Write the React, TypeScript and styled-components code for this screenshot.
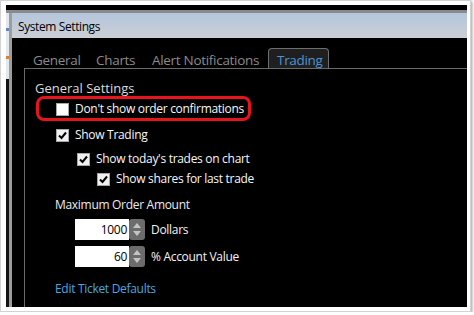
import React from "react";
import styled, { createGlobalStyle } from "styled-components";

const GlobalStyle = createGlobalStyle`
  html, body { margin: 0; padding: 0; background: #ffffff; }
  body { font-family: "Open Sans", "Noto Sans", Arial, sans-serif; }
  *, *::before, *::after { box-sizing: border-box; }
`;

const Frame = styled.div`
  width: 471px;
  height: 312px;
  border: 1px solid #d2d2d2;
  padding: 4px 3px 4px 5px;
  background: #ffffff;
  box-shadow: 1px 1px 3px rgba(0, 0, 0, 0.4);
  display: flex;
`;

const Screen = styled.div`
  flex: 1;
  background: #000;
  display: flex;
  flex-direction: column;
  overflow: hidden;
`;

const TopBand = styled.div`
  height: 5px;
  flex: none;
  background: #000;
`;

const WindowTopEdge = styled.div`
  height: 3px;
  flex: none;
  background: #8a8a8a;
`;

const Desk = styled.div`
  flex: 1;
  display: flex;
  min-height: 0;
`;

const BackdropEdge = styled.div`
  width: 3px;
  flex: none;
  background: linear-gradient(
    #e3e8ee 0px,
    #e3e8ee 15px,
    #5d87c0 15px,
    #5d87c0 18px,
    #e3e8ee 18px,
    #e3e8ee 43px,
    #d9822b 43px,
    #d9822b 46px,
    #e3e8ee 46px,
    #e3e8ee 66px,
    #141414 66px
  );
`;

const Window = styled.div`
  flex: 1;
  display: flex;
  flex-direction: column;
  border-left: 3px solid #9d9d9d;
  min-width: 0;
`;

const TitleBar = styled.div`
  height: 25px;
  flex: none;
  background: linear-gradient(#b4c6dd, #cbcfd5);
  padding: 2px 0 0 6px;
  display: flex;
  align-items: center;
  font-size: 12px;
  letter-spacing: -0.4px;
  line-height: 16px;
  color: #000;
`;

const Content = styled.div`
  flex: 1;
  display: flex;
  flex-direction: column;
  padding-left: 12px;
  min-height: 0;
`;

const TabStrip = styled.div`
  height: 30px;
  flex: none;
  display: flex;
  align-items: flex-end;
`;

const Tab = styled.div<{ $w: number; $active?: boolean }>`
  width: ${(p) => p.$w}px;
  height: 20px;
  flex: none;
  padding: 3px 0 0 8px;
  font-size: 13.5px;
  letter-spacing: -0.3px;
  line-height: 17px;
  white-space: nowrap;
  color: ${(p) => (p.$active ? "#4d93d6" : "#8b8b8b")};
  background: ${(p) => (p.$active ? "#1f1f1f" : "transparent")};
  border: 1px solid ${(p) => (p.$active ? "#6f6f6f" : "transparent")};
  border-bottom: none;
  border-radius: 4px 4px 0 0;
`;

const Panel = styled.div`
  flex: 1;
  border-top: 1px solid #6a6a6a;
  border-left: 1px solid #6a6a6a;
  padding: 11px 0 0 10px;
  display: flex;
  flex-direction: column;
  align-items: flex-start;
`;

const Heading = styled.div`
  font-size: 13px;
  line-height: 16px;
  color: #dcdcdc;
`;

const Annotation = styled.div`
  width: 215px;
  margin-left: 1px;
  border: 3px solid #e8141b;
  border-radius: 8px;
  padding: 2px 0 1px 17px;
`;

const CheckRow = styled.label<{ $indent?: number; $mt?: number }>`
  display: flex;
  align-items: center;
  gap: 6px;
  margin-left: ${(p) => p.$indent ?? 0}px;
  margin-top: ${(p) => p.$mt ?? 0}px;
  font-size: 12px;
  letter-spacing: -0.3px;
  line-height: 16px;
  color: #f7f7f7;
  white-space: nowrap;
`;

const Box = styled.span<{ $checked?: boolean }>`
  width: 13px;
  height: 13px;
  flex: none;
  display: flex;
  align-items: center;
  justify-content: center;
  background: ${(p) => (p.$checked ? "#f0f0f0" : "#ffffff")};
  border: 1px solid #a6a6a6;
`;

const Caption = styled.div<{ $indent?: number; $mt?: number }>`
  margin-left: ${(p) => p.$indent ?? 0}px;
  margin-top: ${(p) => p.$mt ?? 0}px;
  font-size: 12px;
  letter-spacing: -0.3px;
  line-height: 16px;
  color: #ececec;
  white-space: nowrap;
`;

const SpinRow = styled.div<{ $mt?: number }>`
  display: flex;
  align-items: center;
  height: 21px;
  margin-left: 40px;
  margin-top: ${(p) => p.$mt ?? 0}px;
`;

const NumberBox = styled.div`
  width: 54px;
  height: 21px;
  background: #ffffff;
  color: #000;
  font-size: 12px;
  letter-spacing: -0.3px;
  line-height: 21px;
  text-align: right;
  padding-right: 2px;
`;

const SpinButtons = styled.div`
  width: 16px;
  height: 21px;
  background: #6c6c6c;
  border-radius: 3px;
  display: flex;
  flex-direction: column;
  align-items: center;
  justify-content: space-evenly;
`;

const SpinLabel = styled.span`
  margin-left: 6px;
  font-size: 12px;
  letter-spacing: -0.3px;
  line-height: 16px;
  color: #f4f4f4;
  white-space: nowrap;
`;

const Link = styled.a`
  margin-left: 20px;
  margin-top: 14px;
  font-size: 12px;
  letter-spacing: -0.3px;
  line-height: 16px;
  color: #46a8e4;
  text-decoration: none;
  white-space: nowrap;
`;

const Check = () => (
  <svg width="11" height="11" viewBox="0 0 11 11">
    <polyline points="2,5.5 4.5,8 9,2.5" fill="none" stroke="#000" strokeWidth="2" />
  </svg>
);

const Arrow = ({ up }: { up?: boolean }) => (
  <svg width="8" height="5" viewBox="0 0 8 5">
    <polygon points={up ? "0,5 4,0 8,5" : "0,0 8,0 4,5"} fill="#c4c4c4" />
  </svg>
);

const CheckItem = ({
  checked,
  label,
  indent,
  mt,
}: {
  checked?: boolean;
  label: string;
  indent?: number;
  mt?: number;
}) => (
  <CheckRow $indent={indent} $mt={mt}>
    <Box $checked={checked}>{checked && <Check />}</Box>
    {label}
  </CheckRow>
);

const Spinner = ({ value, label, mt }: { value: string; label: string; mt?: number }) => (
  <SpinRow $mt={mt}>
    <NumberBox>{value}</NumberBox>
    <SpinButtons>
      <Arrow up />
      <Arrow />
    </SpinButtons>
    <SpinLabel>{label}</SpinLabel>
  </SpinRow>
);

export default function App() {
  return (
    <>
      <GlobalStyle />
      <Frame>
        <Screen>
          <TopBand />
          <WindowTopEdge />
          <Desk>
            <BackdropEdge />
            <Window>
              <TitleBar>System Settings</TitleBar>
              <Content>
                <TabStrip>
                  <Tab $w={63}>General</Tab>
                  <Tab $w={56}>Charts</Tab>
                  <Tab $w={125}>Alert Notifications</Tab>
                  <Tab $w={61} $active>
                    Trading
                  </Tab>
                </TabStrip>
                <Panel>
                  <Heading>General Settings</Heading>
                  <Annotation>
                    <CheckItem label="Don't show order confirmations" />
                  </Annotation>
                  <CheckItem checked label="Show Trading" indent={21} mt={6} />
                  <CheckItem checked label="Show today's trades on chart" indent={42} mt={8} />
                  <CheckItem checked label="Show shares for last trade" indent={62} mt={4} />
                  <Caption $indent={20} $mt={10}>
                    Maximum Order Amount
                  </Caption>
                  <Spinner value="1000" label="Dollars" mt={6} />
                  <Spinner value="60" label="% Account Value" mt={6} />
                  <Link href="#">Edit Ticket Defaults</Link>
                </Panel>
              </Content>
            </Window>
          </Desk>
        </Screen>
      </Frame>
    </>
  );
}
